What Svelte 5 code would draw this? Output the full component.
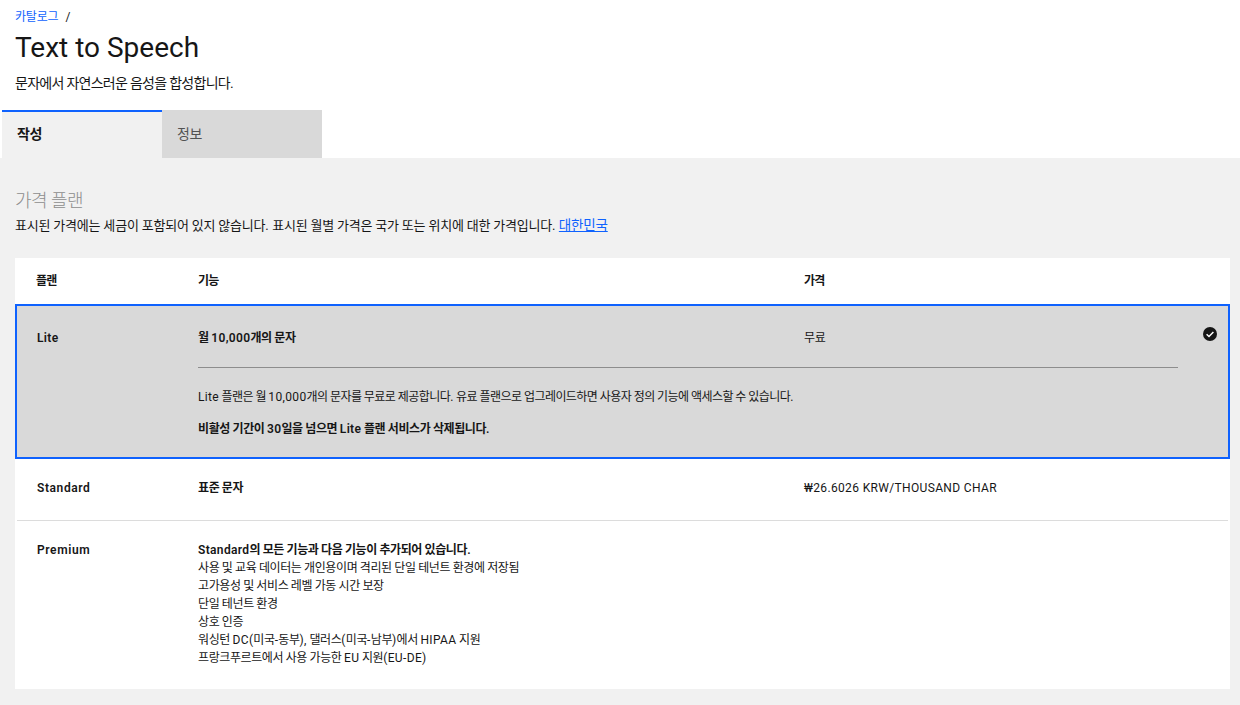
<script>
  const premium = [
    '사용 및 교육 데이터는 개인용이며 격리된 단일 테넌트 환경에 저장됨',
    '고가용성 및 서비스 레벨 가동 시간 보장',
    '단일 테넌트 환경',
    '상호 인증',
    '워싱턴 DC(미국-동부), 댈러스(미국-남부)에서 HIPAA 지원',
    '프랑크푸르트에서 사용 가능한 EU 지원(EU-DE)'
  ];
  // Hangul and Latin need different tracking, so mixed strings are split into runs.
  const runs = (s) => s.split(/([A-Za-z0-9₩.,/()\-]+)/).filter(Boolean);
  const isLatin = (r) => /^[A-Za-z0-9₩.,/()\-]+$/.test(r);
</script>

{#snippet t(s)}{#each runs(s) as r}<span class:en={isLatin(r)}>{r}</span>{/each}{/snippet}

<div class="page">
  <header class="head">
    <nav class="crumbs"><a href="#c">카탈로그</a><span>/</span></nav>
    <h1>Text to Speech</h1>
    <p>{@render t('문자에서 자연스러운 음성을 합성합니다.')}</p>
  </header>

  <div class="tabs">
    <div class="tab active">작성</div>
    <div class="tab">정보</div>
  </div>

  <main class="body">
    <h2>가격 플랜</h2>
    <p class="note">{@render t('표시된 가격에는 세금이 포함되어 있지 않습니다. 표시된 월별 가격은 국가 또는 위치에 대한 가격입니다.')} <a href="#k">대한민국</a></p>

    <section class="table">
      <div class="row th">
        <div>플랜</div>
        <div>기능</div>
        <div>가격</div>
      </div>

      <div class="lite">
        <div class="row top">
          <div class="b">{@render t('Lite')}</div>
          <div class="b">{@render t('월 10,000개의 문자')}</div>
          <div>무료</div>
        </div>
        <div class="detail">
          <p class="tight">{@render t('Lite 플랜은 월 10,000개의 문자를 무료로 제공합니다. 유료 플랜으로 업그레이드하면 사용자 정의 기능에 액세스할 수 있습니다.')}</p>
          <p class="b">{@render t('비활성 기간이 30일을 넘으면 Lite 플랜 서비스가 삭제됩니다.')}</p>
        </div>
        <svg class="check" viewBox="0 0 14 14" width="14" height="14" aria-hidden="true">
          <circle cx="7" cy="7" r="7" fill="#161616" />
          <path d="M3.6 7.2 6 9.5 10.4 5" fill="none" stroke="#fff" stroke-width="1.5" />
        </svg>
      </div>

      <div class="row standard">
        <div class="b wide">{@render t('Standard')}</div>
        <div class="b">표준 문자</div>
        <div class="en">₩26.6026 KRW/THOUSAND CHAR</div>
      </div>

      <div class="row premium">
        <div class="b wide">{@render t('Premium')}</div>
        <div class="list">
          <div class="b">{@render t('Standard의 모든 기능과 다음 기능이 추가되어 있습니다.')}</div>
          {#each premium as line}
            <div>{@render t(line)}</div>
          {/each}
        </div>
        <div></div>
      </div>
    </section>
  </main>
</div>

<style>
  :global(body) {
    margin: 0;
    background: #fff;
  }
  .page {
    width: 1240px;
    height: 705px;
    overflow: hidden;
    font-family: "Roboto", "Noto Sans CJK KR", sans-serif;
    color: #161616;
    display: flex;
    flex-direction: column;
  }
  .head {
    padding: 9px 15px 0;
    height: 110px;
    box-sizing: border-box;
  }
  .crumbs {
    display: flex;
    gap: 7px;
    font-size: 12px;
    line-height: 16px;
    letter-spacing: -0.2px;
  }
  a {
    color: #0f62fe;
    text-decoration: none;
  }
  h1 {
    margin: 5px 0 0;
    font-size: 28px;
    line-height: 36px;
    font-weight: 400;
  }
  .head p {
    margin: 8px 0 0;
    font-size: 14px;
    line-height: 18px;
    letter-spacing: -0.72px;
  }
  .tabs {
    display: flex;
    padding-left: 2px;
    height: 48px;
  }
  .tab {
    width: 160px;
    box-sizing: border-box;
    padding: 15px 15px 0;
    font-size: 14px;
    line-height: 18px;
    background: #d9d9d9;
    color: #525252;
    letter-spacing: -0.5px;
  }
  .tab.active {
    background: #f1f1f1;
    color: #161616;
    font-weight: 600;
    border-top: 2px solid #0f62fe;
    padding-top: 13px;
  }
  .body {
    flex: 1;
    background: #f1f1f1;
    padding: 32px 10px 0 15px;
  }
  h2 {
    margin: 0;
    font-size: 18px;
    line-height: 22px;
    font-weight: 300;
    color: #8d8d8d;
    letter-spacing: -0.5px;
  }
  .note {
    margin: 4px 0 0;
    font-size: 13px;
    line-height: 18px;
    letter-spacing: -0.2px;
  }
  .note a {
    text-decoration: underline;
    font-size: 13.5px;
  }
  .table {
    margin-top: 23px;
    background: #fff;
    font-size: 12px;
    line-height: 18px;
    height: 431px;
    letter-spacing: -0.4px;
  }
  .en {
    letter-spacing: 0.35px;
  }
  .row {
    display: grid;
    grid-template-columns: 161px 606px 1fr;
    padding-left: 22px;
  }
  .th {
    height: 46px;
    align-items: center;
    font-weight: 600;
    letter-spacing: -0.8px;
    padding-left: 21px;
    grid-template-columns: 162px 606px 1fr;
  }
  .b {
    font-weight: 600;
  }
  .wide .en {
    letter-spacing: 0.6px;
  }
  .tight {
    letter-spacing: -0.55px;
  }
  .lite {
    position: relative;
    height: 155px;
    box-sizing: border-box;
    background: #d9d9d9;
    border: 2px solid #0f62fe;
  }
  .lite .row {
    padding-left: 20px;
  }
  .top {
    height: 61px;
    padding-top: 23px;
    box-sizing: border-box;
  }
  .detail {
    margin: 0 50px 0 181px;
    border-top: 1px solid #8d8d8d;
    padding-top: 20px;
  }
  .detail p {
    margin: 0 0 14px;
    font-size: 12px;
    line-height: 18px;
  }
  .check {
    position: absolute;
    top: 21px;
    right: 11px;
  }
  .standard {
    height: 62px;
    padding-top: 20px;
    box-sizing: border-box;
    margin-left: 2px;
    margin-right: 2px;
    padding-left: 20px;
    border-bottom: 1px solid #dcdcdc;
  }
  .premium {
    padding-top: 20px;
  }
</style>
